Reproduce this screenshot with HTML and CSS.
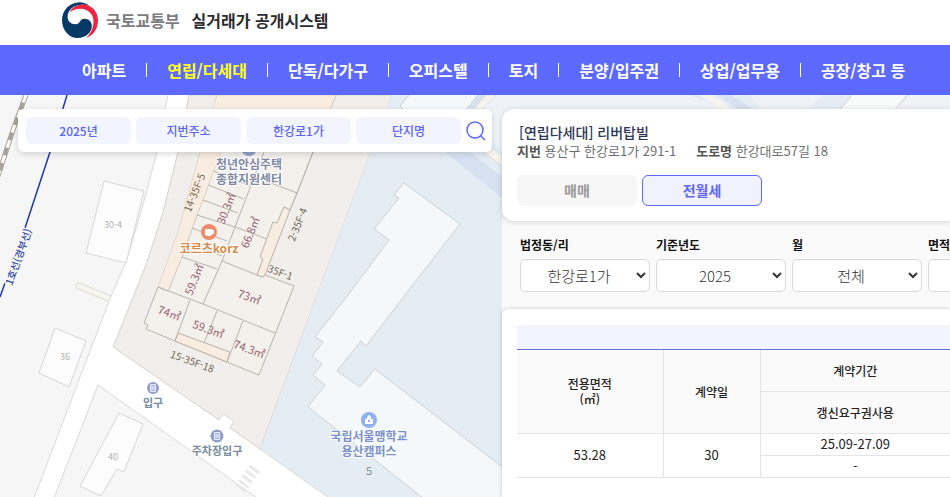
FILE: index.html
```html
<!DOCTYPE html>
<html lang="ko">
<head>
<meta charset="utf-8">
<meta name="viewport" content="width=device-width, initial-scale=1">
<title>국토교통부 실거래가 공개시스템</title>
<link rel="stylesheet" href="styles.css">
</head>
<body>
<header class="brand">
  <svg class="brand-mark" viewBox="0 0 36 36" aria-hidden="true">
    <path fill="#063a66" d="M28 4.5C24.500 1.500 21 .2 17.500 .2C7.500 .2 0 8.500 0 18.200C0 28 7 36 15.500 36C23.500 36 29.800 30.500 29.800 24C29.800 19.500 26.500 16.700 22.500 16.700C17.500 16.700 18.500 22.300 13.500 22.300C8.500 22.300 5.600 19 5.600 14.800C5.600 8 12 2.800 19.500 2.800C23 2.800 25.500 3.300 28 4.500Z"/>
    <path fill="#f0243f" d="M7.500 10.500C10 5.500 15 2.600 20.500 2.600C29.500 2.600 36 9.500 36 18.500C36 26.500 31.500 33.500 24 36C28.500 31.500 31.500 26 31.500 19.500C31.500 12.500 26.500 7.300 19.500 6.800C14.500 6.500 10.500 7.800 7.500 10.500Z"/>
  </svg>
  <span class="brand-ministry">국토교통부</span>
  <h1 class="brand-title">실거래가 공개시스템</h1>
</header>
<nav class="menu" aria-label="주 메뉴">
  <a href="#">아파트</a>
  <a href="#" class="current">연립/다세대</a>
  <a href="#">단독/다가구</a>
  <a href="#">오피스텔</a>
  <a href="#">토지</a>
  <a href="#">분양/입주권</a>
  <a href="#">상업/업무용</a>
  <a href="#">공장/창고 등</a>
</nav>
<main class="workspace">
  <svg class="map" viewBox="0 95 950 402" preserveAspectRatio="xMinYMin slice" role="img" aria-label="지도">
    <rect y="95" width="950" height="402" fill="#f6f6f6"/>
    <!-- district grounds -->
    <path fill="#f1eeeb" stroke="#dcd8d0" d="M189 95L178 152L163 212L147 262L133 297L113 347L219 420L260 449L317 295L392 95Z"/>
    <path fill="#e4ecf4" d="M392 95L317 295L261 449L328 497H950V95Z"/>
    <path fill="#eff3f7" d="M478 95H690L770 130H502V152L467 108Z"/>
    <path fill="#d6e2f1" d="M445 152H470L502 177V198ZM464 108L478 95H490L470 112Z"/>
    <path fill="#f8f5ef" stroke="#dedfdf" d="M474 109L486 95H496L482 109ZM485 143L502 156V166L478 148Z"/>
    <path fill="#eff3f7" d="M750 95H823L805 112H762Z"/>
    <path fill="#f8f5ef" d="M700 95H713L736 112H724Z"/>
    <path fill="#d6e2f1" d="M718 95H730L758 112H742Z"/>
    <path fill="#f9fafa" stroke="#d3d6da" d="M853 94H908L893 112H838Z"/>
    <path fill="#f0f2f5" d="M909 95H950V112H894Z"/>
    <!-- railway and subway line -->
    <path fill="none" stroke="#a9a39b" stroke-width="5" d="M26 95L13 130L-2 176"/>
    <path fill="none" stroke="#fff" stroke-width="3" stroke-dasharray="8 8" d="M26 95L13 130L-2 176"/>
    <path fill="none" stroke="#203a9c" stroke-width="1.500" d="M67 95L50 152L25 228M5 283L0 297"/>
    <!-- roads -->
    <path fill="none" stroke="#dededa" stroke-width="7" stroke-linecap="round" d="M79 286L118 302"/>
    <path fill="none" stroke="#f6f5f0" stroke-width="5" stroke-linecap="round" d="M79 286L118 302"/>
    <path fill="#fff" stroke="#d2d0ca" stroke-width=".8" d="M168 94L157 152L143 205L126 262L109 301L34 498H54L98 385L257 498H329L260 449L230 428L234 421L223 414L219 420L113 347L133 297L147 262L163 212L178 152L189 94Z"/>
    <path fill="none" stroke="#e9e9e9" stroke-width="12" stroke-dasharray="3 3" d="M255 468L240 489"/>
    <!-- buildings west of the road -->
    <g fill="#fcfcfc" stroke="#d6d6d6">
      <path d="M104 181L144 191L126 263L86 253Z"/>
      <path d="M55 328L86 341L69 387L39 373Z"/>
      <path d="M119 413L143 424L124 472L117 469L101 496L80 486Z"/>
    </g>
    <!-- apartment block parcels -->
    <path fill="#f4f1ed" stroke="#b8b3aa" d="M221 152L208 185L197 215L182 257L168 291L158 287L144 323L148 325L146 329L175 341L259 375L294 286L265 275L262 277L257 275L284 207L290 210L297 193L313 152L336 95H245Z"/>
    <path fill="#f9ece0" stroke="#d8cec2" stroke-width=".7" d="M217 95H336L313 152H221L197 215L182 257L168 291L158 287L178 232L200 152Z"/>
    <path fill="#f4f1ed" d="M222 150H313L297 192L260 179L212 176Z"/>
    <path fill="#f9ece0" stroke="#b8b3aa" d="M284 207L290 210L265 275L262 277L257 275L263 259L260 257L273 222L277 223ZM178 333L230 352L227 362L175 341Z"/>
    <path fill="none" stroke="#b8b3aa" d="M158 287L203 304L275 333M203 304L222 261L235 227L250 188L264 152M222 261L257 275M182 257L217 269M187 242L222 256M192 228L227 241M197 215L235 227L267 239M203 200L238 213M208 185L244 199M214 171L250 186M297 193L258 178M190 300L175 341M217 311L204 343M243 321L227 362M313 152L297 193L290 210"/>
    <!-- school grounds -->
    <g fill="#f4f8fb" stroke="#cfd2d5">
      <path d="M404 183L460 224L405 295L366 346L361 341L337 371L360 387L375 369L501 466L510 473V498H423L308 407L325 385L313 375L322 364L312 356L323 342L315 337L348 295L389 240L374 229L399 198L394 195Z"/>
      <path d="M410 94L400 106L406 112H464L479 94Z"/>
    </g>
    <g class="map-number">
      <text x="113" y="228">30-4</text>
      <text x="65" y="360">36</text>
      <text x="113" y="460">40</text>
      <text x="369" y="475" class="lot">5</text>
    </g>
    <text class="map-line" transform="translate(22 258) rotate(-70)">1호선(경부선)</text>
    <g class="map-unit">
      <text transform="translate(198 194) rotate(-68)">14-35F-5</text>
      <text transform="translate(301 226) rotate(-68)">2-35F-4</text>
      <text transform="translate(279 276) rotate(20)">35F-1</text>
      <text transform="translate(191 365) rotate(20)">15-35F-18</text>
    </g>
    <g class="map-area">
      <text transform="translate(230 210) rotate(-68)">30.3㎡</text>
      <text transform="translate(254 234) rotate(-68)">66.8㎡</text>
      <text transform="translate(198 281) rotate(-68)">59.3㎡</text>
      <text transform="translate(248 301) rotate(20)">73㎡</text>
      <text transform="translate(168 317) rotate(20)">74㎡</text>
      <text transform="translate(207 333) rotate(20)">59.3㎡</text>
      <text transform="translate(248 353) rotate(20)">74.3㎡</text>
    </g>
    <!-- places -->
    <circle cx="249" cy="148" r="8" fill="#8fa0c8"/>
    <text class="place slate" x="249" y="169">청년안심주택</text>
    <text class="place slate" x="249" y="184">종합지원센터</text>
    <circle cx="209" cy="232" r="8" fill="#ee8c6a"/>
    <path fill="#fff" d="M205 229H212V230H214V234H212C212 235 211 236 210 236H207C206 236 205 235 205 234Z"/>
    <text class="place orange" x="209" y="253">코르츠korz</text>
    <g transform="translate(153 388)">
      <circle r="6" fill="#8fa0c8"/>
      <path fill="#a9b7dc" stroke="#e6ebf7" d="M-2.500 -3.500H2.500V3.500H-2.500ZM-1 2V-1.500L1 1.500V-2"/>
    </g>
    <text class="place teal" x="153" y="407">입구</text>
    <g transform="translate(217 436)">
      <circle r="6.500" fill="#8fa0c8"/>
      <path fill="#a9b7dc" stroke="#e6ebf7" d="M-2.500 -3.500H2.500V3.500H-2.500ZM-1 2V-1.500L1 1.500V-2"/>
    </g>
    <text class="place teal" x="217" y="455">주차장입구</text>
    <circle cx="369" cy="420" r="8" fill="#8fb1ef"/>
    <path fill="#fff" fill-rule="evenodd" d="M365 419H367V417L368.500 416V415H370V416L371 417V419H373V424H365ZM368 420V422H370V420Z"/>
    <text class="place blue" x="369" y="441">국립서울맹학교</text>
    <text class="place blue" x="369" y="456">용산캠퍼스</text>
  </svg>
  <form class="search">
    <button type="button" class="chip">2025년</button>
    <button type="button" class="chip">지번주소</button>
    <button type="button" class="chip">한강로1가</button>
    <button type="button" class="chip">단지명</button>
    <button type="submit" class="search-go" aria-label="검색">
      <svg viewBox="0 0 20 20" aria-hidden="true"><circle cx="9" cy="9" r="8"/><path d="M14.500 14.500L19 19"/></svg>
    </button>
  </form>
  <div class="detail">
    <section class="summary">
      <h2>[연립다세대] 리버탑빌</h2>
      <p class="address">
        <span><b>지번</b> 용산구 한강로1가 291-1</span>
        <span><b>도로명</b> 한강대로57길 18</span>
      </p>
      <div class="tabs">
        <button type="button" class="tab">매매</button>
        <button type="button" class="tab selected">전월세</button>
      </div>
    </section>
    <form class="filters">
      <div class="field"><label for="dong">법정동/리</label><select id="dong"><option>한강로1가</option></select></div>
      <div class="field"><label for="year">기준년도</label><select id="year"><option>2025</option></select></div>
      <div class="field"><label for="month">월</label><select id="month"><option>전체</option></select></div>
      <div class="field"><label for="area">면적</label><select id="area"><option></option></select></div>
    </form>
    <section class="results">
      <table class="deals">
        <colgroup><col class="col-area"><col class="col-day"><col></colgroup>
        <thead>
          <tr class="band"><td colspan="3"></td></tr>
          <tr><th rowspan="2" scope="col">전용면적<br>(㎡)</th><th rowspan="2" scope="col">계약일</th><th scope="col">계약기간</th></tr>
          <tr><th scope="col">갱신요구권사용</th></tr>
        </thead>
        <tbody>
          <tr><td rowspan="2">53.28</td><td rowspan="2">30</td><td>25.09-27.09</td></tr>
          <tr><td>-</td></tr>
        </tbody>
      </table>
    </section>
  </div>
</main>
</body>
</html>
```
FILE: styles.css
```css
* { box-sizing: border-box; }

body {
  margin: 0;
  height: 100vh;
  display: flex;
  flex-direction: column;
  overflow: hidden;
  background: #fff;
  color: #222;
  font-family: "Noto Sans CJK KR", "Noto Sans", sans-serif;
}

button, select { font-family: inherit; margin: 0; }

.brand {
  flex: none;
  display: flex;
  align-items: center;
  height: 45px;
  padding: 0 62px 5px;
}
.brand-mark { width: 36px; height: 36px; margin-right: 8px; }
.brand-ministry { font-size: 16px; font-weight: 700; color: #7b7c80; margin-right: 12px; }
.brand-title { margin: 0; font-size: 16px; font-weight: 700; color: #2b2c31; }

.menu {
  flex: none;
  display: flex;
  align-items: center;
  height: 50px;
  padding-left: 62px;
  background: #5c69fc;
  white-space: nowrap;
}
.menu a {
  padding: 0 20px;
  color: #fff;
  font-size: 16px;
  font-weight: 700;
  line-height: 14px;
  text-decoration: none;
}
.menu a + a { border-left: 1px solid #fff; }
.menu .current { color: #ffff1a; }

.workspace {
  position: relative;
  flex: 1;
  min-height: 0;
  display: grid;
  grid-template-columns: 474px minmax(0, 1fr);
  column-gap: 10px;
  padding: 14px 0 0 18px;
}
.map { position: absolute; top: 0; left: 0; width: 100%; height: 100%; }
.map text { text-anchor: middle; paint-order: stroke; stroke-linejoin: round; }
.map-number { font-size: 9px; fill: #b5b5b5; }
.map-number .lot { font-size: 11px; fill: #85898f; }
.map-line { font-size: 10px; font-weight: 500; fill: #2a3f9d; stroke: #f6f6f6; stroke-width: 3px; }
.map-unit { font-size: 10px; fill: #6f6551; }
.map-area { font-size: 11px; fill: #96606f; }
.place { font-size: 12px; font-weight: 700; stroke: #fff; stroke-width: 2px; }
.slate { fill: #7f89a3; }
.orange { fill: #d58b4b; }
.teal { font-size: 11px; fill: #778da1; }
.blue { fill: #7890cc; }

.search {
  position: relative;
  align-self: start;
  display: flex;
  align-items: center;
  gap: 5px;
  padding: 8px;
  background: #fff;
  border-radius: 6px;
  box-shadow: 0 2px 6px rgba(0, 0, 0, .15);
}
.chip {
  flex: 1;
  height: 27px;
  padding: 0;
  border: 0;
  border-radius: 6px;
  background: #f2f5ff;
  color: #5c64f2;
  font-size: 12px;
  font-weight: 500;
}
.search-go { width: 18px; height: 20px; padding: 0; border: 0; background: none; }
.search-go svg { display: block; width: 20px; height: 20px; fill: none; stroke: #5c69fc; stroke-width: 1.500; }

.detail {
  position: relative;
  min-height: 0;
  display: flex;
  flex-direction: column;
  background: linear-gradient(transparent 100px, #fafafa 112px);
}
.summary {
  position: relative;
  flex: none;
  padding: 14px 15px 15px;
  background: #fff;
  border-radius: 12px 0 0 12px;
  box-shadow: 0 1px 6px rgba(0, 0, 0, .16);
}
.summary h2 { margin: 0 2px; font-size: 14px; line-height: 18px; font-weight: 500; color: #2b3557; }
.address { display: flex; gap: 20px; margin: 0; font-size: 13px; line-height: 20px; color: #6e6e6e; white-space: nowrap; }
.address b { color: #555; }
.tabs { display: flex; gap: 5px; margin-top: 14px; }
.tab {
  width: 120px;
  height: 31px;
  padding: 0 0 2px;
  border: 1px solid #f7f7f7;
  border-radius: 6px;
  background: #f7f7f7;
  color: #999;
  font-size: 14px;
  font-weight: 700;
}
.tab.selected { border-color: #5c69fc; background: #f2f2ff; color: #5f68f5; }

.filters {
  flex: none;
  display: flex;
  gap: 6px;
  padding: 16px 0 17px 18px;
  background: #fafafa;
  overflow: hidden;
}
.field { flex: none; width: 130px; }
.field label { display: block; font-size: 12px; line-height: 16px; font-weight: 700; color: #111; }
.field select {
  width: 100%;
  height: 33px;
  margin-top: 6px;
  border: 1px solid #d9d9d9;
  border-radius: 5px;
  background-color: #fff;
  color: #333;
  font-size: 15px;
  font-weight: 300;
  text-align-last: center;
}

.results {
  position: relative;
  flex: 1;
  padding: 16px 0 0 15px;
  background: #fff;
  border-radius: 6px 0 0 0;
  box-shadow: 0 0 4px rgba(0, 0, 0, .2);
}
.deals { width: 100%; border-collapse: collapse; table-layout: fixed; font-size: 13px; text-align: center; }
.col-area { width: 146px; }
.col-day { width: 97px; }
.deals th, .deals td { padding: 0; border: 1px solid #e5e5e5; }
.deals tr > :first-child[rowspan], .deals .band td { border-left: 0; }
.deals tr > :last-child { border-right: 0; }
.deals th { height: 42px; background: #fafafa; font-size: 12px; line-height: 15px; font-weight: 500; }
.deals tbody td { height: 22px; line-height: 18px; }
.deals .band td { height: 24px; background: #f2f5ff; border-top: 0; border-bottom: 1px solid #6a70d8; }
```
